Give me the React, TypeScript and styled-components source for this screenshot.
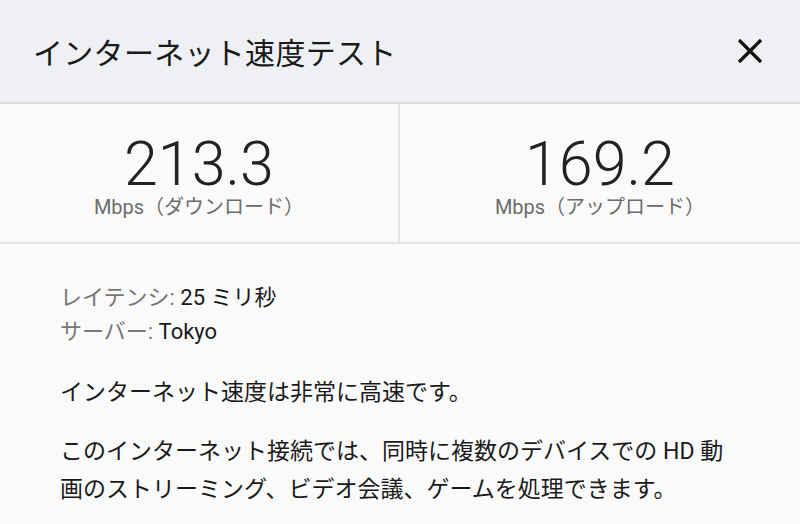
import React from "react";
import styled, { createGlobalStyle } from "styled-components";

const Global = createGlobalStyle`
  html, body { margin: 0; padding: 0; background: #fafafa; }
  body { font-family: Roboto, "Noto Sans CJK JP", sans-serif; }
`;

const Page = styled.div`
  width: 800px;
  height: 524px;
  overflow: hidden;
  background: #fafafa;
  display: flex;
  flex-direction: column;
`;

const Header = styled.header`
  height: 102px;
  flex: none;
  background: #eff0f3;
  border-bottom: 2px solid #d9d9dc;
  display: flex;
  align-items: center;
  justify-content: space-between;
  padding: 0 36px 0 33px;
  box-sizing: content-box;
`;

const Title = styled.h1`
  margin: 0;
  font-family: "Noto Sans CJK JP", sans-serif;
  font-size: 30px;
  font-weight: 400;
  color: #1a1a1a;
  line-height: 1;
  letter-spacing: 0.3px;
`;

const CloseButton = styled.button`
  border: none;
  background: transparent;
  padding: 0;
  width: 28px;
  height: 28px;
  display: flex;
  align-items: center;
  justify-content: center;
  cursor: pointer;
`;

const Stats = styled.section`
  display: grid;
  grid-template-columns: 1fr 1fr;
  height: 138px;
  flex: none;
  border-bottom: 2px solid #e3e3e3;
  background: #fafafa;
`;

const Stat = styled.div<{ $divider?: boolean }>`
  display: flex;
  flex-direction: column;
  align-items: center;
  padding-top: 29px;
  border-right: ${(p) => (p.$divider ? "2px solid #e3e3e3" : "none")};
`;

const Value = styled.div`
  font-family: Roboto, sans-serif;
  font-weight: 300;
  font-size: 61px;
  line-height: 62px;
  height: 62px;
  color: #222;
`;

const Unit = styled.div`
  font-family: Roboto, "Noto Sans CJK JP", sans-serif;
  font-size: 20px;
  line-height: 22px;
  color: #6c6c6c;
  margin-top: 1px;
`;

const Body = styled.section`
  padding: 37px 60px 0 60px;
  display: flex;
  flex-direction: column;
`;

const InfoList = styled.div`
  display: flex;
  flex-direction: column;
`;

const InfoRow = styled.div`
  font-size: 22px;
  line-height: 34px;
  color: #1a1a1a;
`;

const Label = styled.span`
  color: #777;
`;

const Verdict = styled.p`
  margin: 27px 0 0 0;
  font-size: 23px;
  line-height: 34px;
  color: #1a1a1a;
`;

const Description = styled.p`
  margin: 23px 0 0 0;
  font-size: 23px;
  line-height: 38px;
  color: #1a1a1a;
`;

export default function App() {
  return (
    <>
      <Global />
      <Page>
        <Header>
          <Title>インターネット速度テスト</Title>
          <CloseButton aria-label="閉じる">
            <svg width="26" height="26" viewBox="0 0 26 26">
              <path d="M2 2 L24 24 M24 2 L2 24" stroke="#111" strokeWidth="3.2" strokeLinecap="butt" />
            </svg>
          </CloseButton>
        </Header>
        <Stats>
          <Stat $divider>
            <Value>213.3</Value>
            <Unit>Mbps（ダウンロード）</Unit>
          </Stat>
          <Stat>
            <Value>169.2</Value>
            <Unit>Mbps（アップロード）</Unit>
          </Stat>
        </Stats>
        <Body>
          <InfoList>
            <InfoRow>
              <Label>レイテンシ: </Label>25 ミリ秒
            </InfoRow>
            <InfoRow>
              <Label>サーバー: </Label>Tokyo
            </InfoRow>
          </InfoList>
          <Verdict>インターネット速度は非常に高速です。</Verdict>
          <Description>
            このインターネット接続では、同時に複数のデバイスでの HD 動
            <br />
            画のストリーミング、ビデオ会議、ゲームを処理できます。
          </Description>
        </Body>
      </Page>
    </>
  );
}
